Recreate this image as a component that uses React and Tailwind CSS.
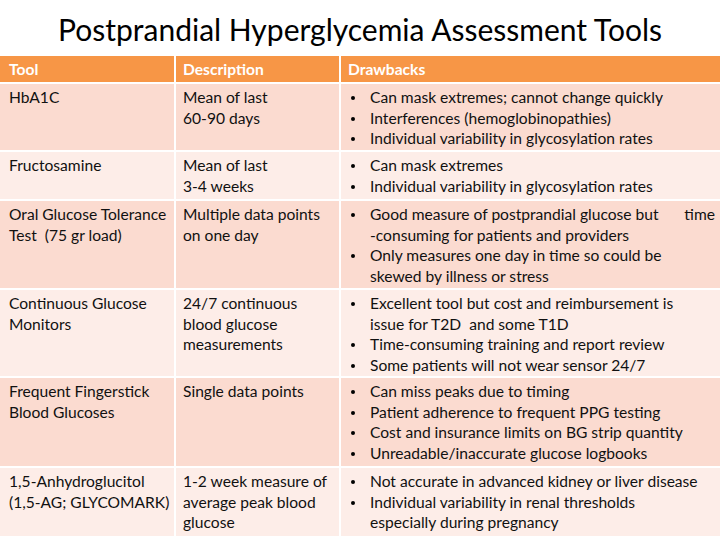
const rows = [
  {
    tool: ["HbA1C"],
    desc: ["Mean of last", "60-90 days"],
    drawbacks: [
      ["Can mask extremes; cannot change quickly"],
      ["Interferences (hemoglobinopathies)"],
      ["Individual variability in glycosylation rates"],
    ],
    h: "h-[66px]",
    bg: "bg-[#fbdbd0]",
  },
  {
    tool: ["Fructosamine"],
    desc: ["Mean of last", "3-4 weeks"],
    drawbacks: [["Can mask extremes"], ["Individual variability in glycosylation rates"]],
    h: "h-[47px]",
    bg: "bg-[#fdede8]",
  },
  {
    tool: ["Oral Glucose Tolerance", "Test  (75 gr load)"],
    desc: ["Multiple data points", "on one day"],
    drawbacks: [
      ["SPLIT", "-consuming for patients and providers"],
      ["Only measures one day in time so could be", "skewed by illness or stress"],
    ],
    h: "h-[87px]",
    bg: "bg-[#fbdbd0]",
  },
  {
    tool: ["Continuous Glucose", "Monitors"],
    desc: ["24/7 continuous", "blood glucose", "measurements"],
    drawbacks: [
      ["Excellent tool but cost and reimbursement is", "issue for T2D  and some T1D"],
      ["Time-consuming training and report review"],
      ["Some patients will not wear sensor 24/7"],
    ],
    h: "h-[86px]",
    bg: "bg-[#fdede8]",
  },
  {
    tool: ["Frequent Fingerstick", "Blood Glucoses"],
    desc: ["Single data points"],
    drawbacks: [
      ["Can miss peaks due to timing"],
      ["Patient adherence to frequent PPG testing"],
      ["Cost and insurance limits on BG strip quantity"],
      ["Unreadable/inaccurate glucose logbooks"],
    ],
    h: "h-[88px]",
    bg: "bg-[#fbdbd0]",
  },
  {
    tool: ["1,5-Anhydroglucitol", "(1,5-AG; GLYCOMARK)"],
    desc: ["1-2 week measure of", "average peak blood", "glucose"],
    drawbacks: [
      ["Not accurate in advanced kidney or liver disease"],
      ["Individual variability in renal thresholds", "especially during pregnancy"],
    ],
    h: "h-[68px]",
    bg: "bg-[#fdede8]",
  },
];

const Lines = ({ lines }) => (
  <div>
    {lines.map((l, i) => (
      <div key={i} className="whitespace-pre">
        {l}
      </div>
    ))}
  </div>
);

export default function App() {
  return (
    <div
      className="w-[720px] h-[540px] bg-white text-black overflow-hidden"
      style={{ fontFamily: "Lato, 'Open Sans', sans-serif" }}
    >
      <div className="h-[56px] flex items-start justify-center pt-[11px] text-[30px] leading-[36px]">
        Postprandial Hyperglycemia Assessment Tools
      </div>
      <div className="grid grid-cols-[174px_163px_1fr] gap-x-[2px] gap-y-[2px] text-[15.6px] leading-[20.5px] text-[#111]">
        <div className="h-[26px] bg-[#f79646] text-white font-bold pl-[9px] flex items-center">Tool</div>
        <div className="h-[26px] bg-[#f79646] text-white font-bold pl-[7px] flex items-center">Description</div>
        <div className="h-[26px] bg-[#f79646] text-white font-bold pl-[7px] flex items-center">Drawbacks</div>
        {rows.map((r, i) => (
          <>
            <div key={"t" + i} className={`${r.h} ${r.bg} pl-[9px] pt-[3px]`}>
              <Lines lines={r.tool} />
            </div>
            <div key={"d" + i} className={`${r.h} ${r.bg} pl-[7px] pt-[3px]`}>
              <Lines lines={r.desc} />
            </div>
            <div key={"b" + i} className={`${r.h} ${r.bg} pl-[9px] pr-[5px] pt-[3px]`}>
              {r.drawbacks.map((b, j) => (
                <div key={j} className="flex">
                  <span className="w-[20px] shrink-0 pt-[9px] pl-[1px]">
                    <span className="block w-[4px] h-[4px] rounded-full bg-black" />
                  </span>
                  {b[0] === "SPLIT" ? (
                    <div className="flex-1">
                      <div className="flex justify-between">
                        <span>Good measure of postprandial glucose but</span>
                        <span>time</span>
                      </div>
                      <div>{b[1]}</div>
                    </div>
                  ) : (
                    <Lines lines={b} />
                  )}
                </div>
              ))}
            </div>
          </>
        ))}
      </div>
    </div>
  );
}
